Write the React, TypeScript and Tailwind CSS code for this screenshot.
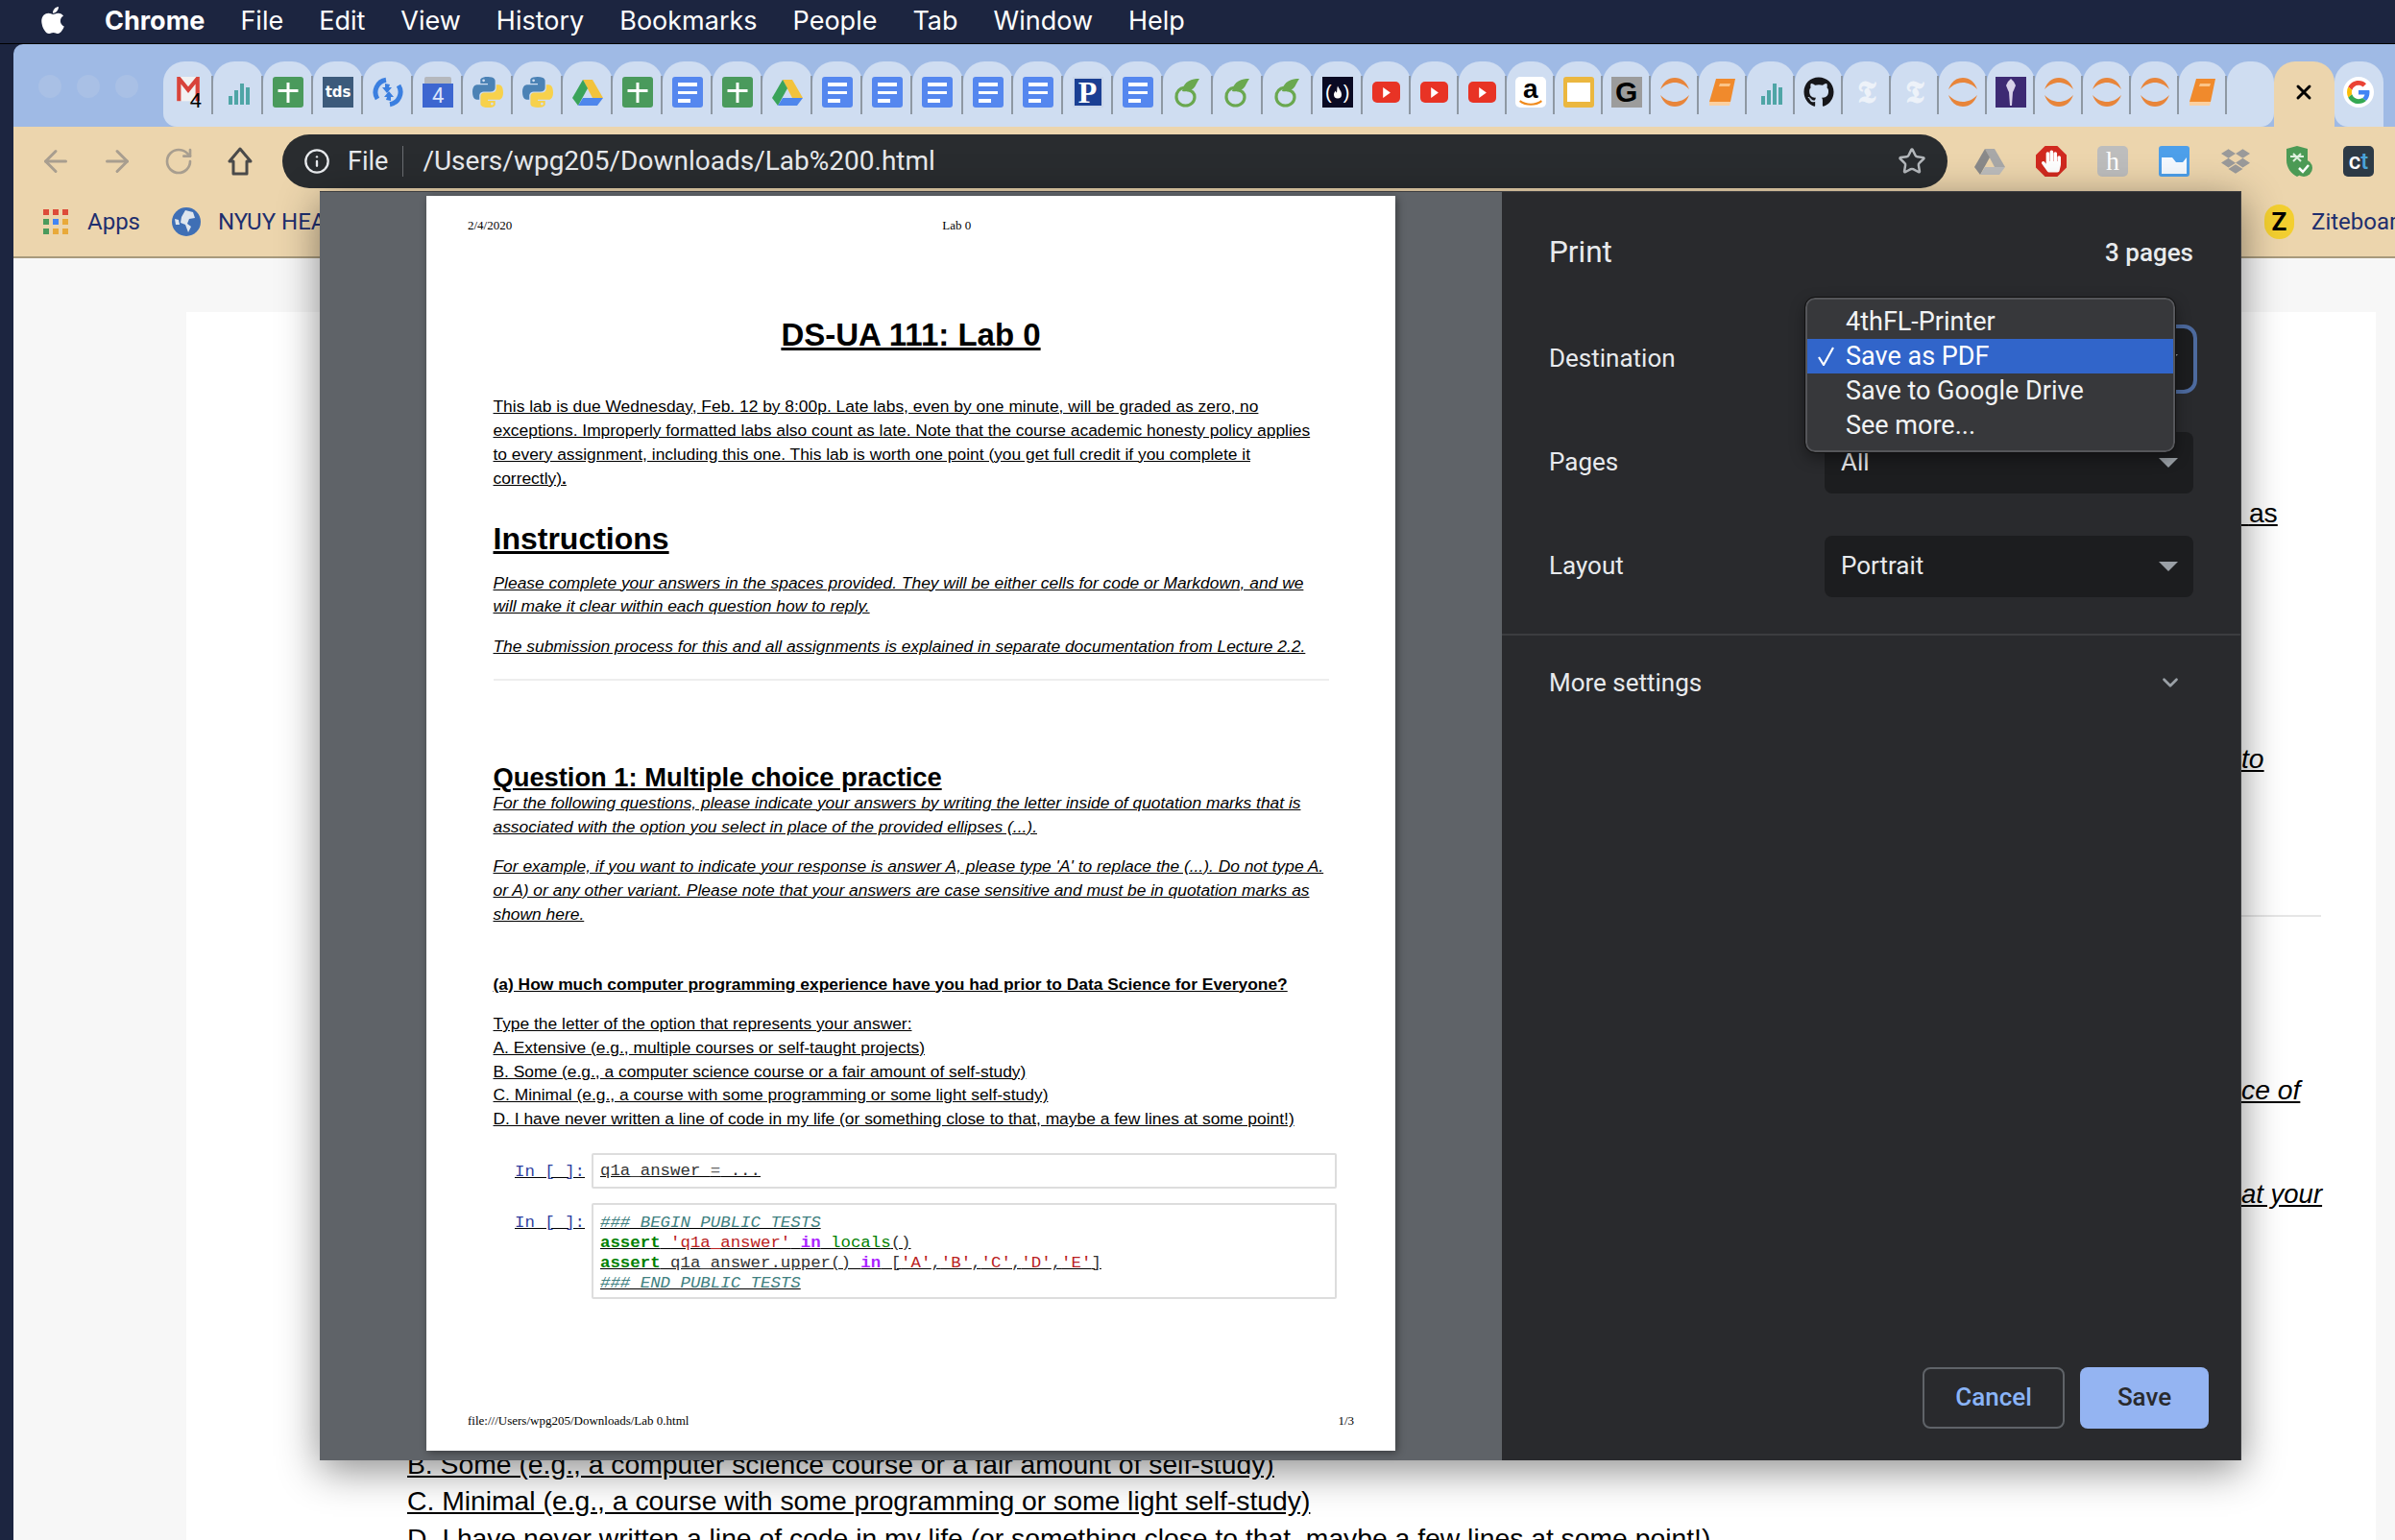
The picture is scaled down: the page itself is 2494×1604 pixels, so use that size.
import React from "react";
import { FaApple, FaGithub, FaDropbox, FaHandPaper } from "react-icons/fa";
import { ArrowLeft, ArrowRight, RotateCw, Info, Star, ChevronDown, X } from "lucide-react";

const Sheet = () => (
  <div className="w-8 h-8 rounded-[3px] bg-[#4a9a5c] relative">
    <svg viewBox="0 0 32 32" className="w-8 h-8"><path d="M14.500 6h3v7h9v3h-9v11h-3V16h-9v-3h9z" fill="#fff" /></svg>
  </div>
);
const Doc = () => (
  <div className="w-8 h-8 rounded-[3px] bg-[#5587ef] flex flex-col gap-[5px] pt-[6px] pl-[6px]">
    <div className="w-5 h-[3.500px] bg-white" />
    <div className="w-5 h-[3.500px] bg-white" />
    <div className="w-[13px] h-[3.500px] bg-white" />
  </div>
);
const Bars = () => (
  <svg viewBox="0 0 32 32" className="w-8 h-8" fill="#4fa5a6">
    <rect x="6" y="20" width="4" height="9" /><rect x="12" y="14" width="4" height="15" /><rect x="18" y="7" width="4" height="22" /><rect x="24" y="11" width="4" height="18" />
  </svg>
);
const Python = () => (
  <svg viewBox="0 0 24 24" className="w-8 h-8">
    <path fill="#4b82b5" d="M11.900 0C5.800 0 6.200 2.600 6.200 2.600v2.700h5.800v.8H3.900S0 5.700 0 11.900s3.400 6 3.400 6h2V15s-.1-3.400 3.300-3.400h5.800s3.200.1 3.200-3.100V3.200S18.200 0 11.900 0zM8.700 1.800a1 1 0 110 2.100 1 1 0 010-2.100z" />
    <path fill="#f7d14c" d="M12.100 24c6.100 0 5.700-2.600 5.700-2.600v-2.700h-5.800v-.8h8.100s3.900.4 3.900-5.800-3.400-6-3.400-6h-2V9s.1 3.400-3.300 3.400H9.500s-3.200-.1-3.200 3.100v5.300S5.800 24 12.100 24zm3.200-1.800a1 1 0 110-2.100 1 1 0 010 2.100z" />
  </svg>
);
const Drive = ({ grey = false }: { grey?: boolean }) => (
  <svg viewBox="0 0 32 32" className="w-8 h-8">
    <path fill={grey ? "#a8a8a8" : "#f3c33c"} d="M11 3h10l11 19H21z" />
    <path fill={grey ? "#8a8a8a" : "#3aa35a"} d="M11 3l5 9-10 18-6-8z" />
    <path fill={grey ? "#bcbcbc" : "#4e86ec"} d="M11 22h21l-6 8H6z" />
  </svg>
);
const Overleaf = () => (
  <svg viewBox="0 0 32 32" className="w-8 h-8" fill="none">
    <path d="M13 11C7 12 4 16 4 21c0 5 4 9 9.500 9s9.500-4 9.500-9c0-4-3-7-7-7" stroke="#6aa84f" strokeWidth="3.200" strokeLinecap="round" />
    <path d="M28 2C20 2 12 4 10 15c6 1 11-1 13.500-5 1.500-3 3-6 4.500-8z" fill="#6aa84f" />
  </svg>
);
const YT = () => (
  <div className="w-[29px] h-[22px] rounded-[5px] bg-[#e83325] flex items-center justify-center">
    <svg viewBox="0 0 10 10" className="w-[11px] h-[11px]"><path d="M2 0l7 5-7 5z" fill="#fff" /></svg>
  </div>
);
const Arcs = () => (
  <svg viewBox="0 0 32 32" className="w-8 h-8" fill="#e8853a">
    <path d="M1 13C4 5 9 1 16 1s12 4 15 12C26 8 21 6 16 6S6 8 1 13z" />
    <path d="M1 19c3 8 8 12 15 12s12-4 15-12c-5 5-10 7-15 7S6 24 1 19z" />
  </svg>
);
const Book = () => (
  <svg viewBox="0 0 32 32" className="w-8 h-8">
    <path d="M9 2h20l-5 24H2z" fill="#f08a2c" />
    <path d="M2 26h22l-1 4H2z" fill="#fbd0a0" />
    <path d="M13 7h11l-1 3H12z" fill="#fbc488" />
  </svg>
);
const Nyt = () => (
  <span className="w-8 h-8 flex items-center justify-center text-[#edf2f9] text-[32px] leading-8 font-bold font-['DejaVu_Serif','DejaVu_Sans',serif]">𝕿</span>
);

const icons: React.ReactNode[] = [
  <div className="w-[28px] h-8 relative">
    <svg viewBox="0 0 28 32" className="w-[28px] h-[27px]"><rect width="28" height="30" fill="#f2f2f2" /><path d="M0 0h4l10 12L24 0h4v30h-5V9l-9 11L5 9v21H0z" fill="#d8433a" /></svg>
    <span className="absolute right-0 bottom-[-4px] text-[22px] leading-[22px] text-black font-['Liberation_Sans',sans-serif]">4</span>
  </div>,
  <Bars />, <Sheet />,
  <div className="w-8 h-8 bg-[#3c5a7b] text-white text-[15px] font-bold flex items-center justify-center font-['DejaVu_Sans',sans-serif]">tds</div>,
  <svg viewBox="0 0 32 32" className="w-8 h-8" fill="none">
    <path d="M14 3.200A13 13 0 005 23" stroke="#3b7fe0" strokeWidth="5" />
    <path d="M18 28.800A13 13 0 0027 9" stroke="#3b7fe0" strokeWidth="5" />
    <path d="M10 11h3V7l5 1-1 3h3l-5 6z" fill="#3b7fe0" />
    <path d="M22 21h-3v4l-5-1 1-3h-3l5-6z" fill="#3b7fe0" />
  </svg>,
  <div className="w-8 h-8 relative">
    <div className="h-[7px] bg-[#b5b8bd] rounded-t-[2px] mx-[2px]" />
    <div className="h-[25px] bg-[#3d66d0] text-[#dbe5fb] text-[22px] leading-[25px] text-center font-['Roboto',sans-serif]">4</div>
  </div>,
  <Python />, <Python />, <Drive />, <Sheet />, <Doc />, <Sheet />, <Drive />, <Doc />, <Doc />, <Doc />, <Doc />, <Doc />,
  <div className="w-8 h-8 bg-[#1b3f93] text-white text-[32px] leading-[28px] font-bold text-center font-['Liberation_Serif',serif] border-[2px] border-[#c9d6ea]">P</div>,
  <Doc />, <Overleaf />, <Overleaf />, <Overleaf />,
  <div className="w-8 h-8 bg-[#0a0a23] text-white flex items-center justify-center text-[20px] leading-8 font-['Liberation_Sans',sans-serif]">
    (<svg viewBox="0 0 10 14" className="w-[10px] h-[15px] mx-[1px]"><path d="M5 0c1 3 4 5 4 9a4 4 0 01-8 0c0-2 1-3 2-4 0 1 .5 2 1 2 .5-2 0-4 1-7z" fill="#fff" /></svg>)
  </div>,
  <YT />, <YT />, <YT />,
  <div className="w-8 h-8 rounded-[5px] bg-white relative flex justify-center">
    <span className="text-[28px] leading-[26px] font-bold text-black font-['Liberation_Sans',sans-serif]">a</span>
    <svg viewBox="0 0 32 8" className="absolute bottom-[1px] left-[3px] w-[26px] h-[7px]"><path d="M2 1c8 6 20 6 28 0" stroke="#f08a1c" strokeWidth="2.500" fill="none" /></svg>
  </div>,
  <div className="w-8 h-8 rounded-[3px] bg-[#ebb73f] flex items-center justify-center"><div className="w-6 h-[20px] bg-white" /></div>,
  <div className="w-8 h-8 bg-[#9c9c9c] text-black text-[30px] leading-8 font-bold text-center font-['Liberation_Sans',sans-serif]">G</div>,
  <Arcs />, <Book />, <Bars />, <FaGithub className="w-8 h-8 text-[#16161a]" />, <Nyt />, <Nyt />, <Arcs />,
  <div className="w-8 h-8 bg-[#3d2a73] flex items-center justify-center">
    <svg viewBox="0 0 16 28" className="w-4 h-7"><path d="M8 0l3 3 2 4-2 5-1 2-1 14H7L6 14 5 12 3 7l2-4z" fill="#d9d2ea" /></svg>
  </div>,
  <Arcs />, <Arcs />, <Arcs />, <Book />,
];

function Tab({ icon, index }: { icon: React.ReactNode; index: number }) {
  return (
    <div className={`${index < 24 ? "w-[52.040px]" : "w-[50px]"} ${index === 0 ? "rounded-bl-[14px]" : ""} h-[68px] bg-[#cfddf1] rounded-t-[22px] flex items-center justify-center relative shrink-0 pb-[4px]`}>
      {icon}
      <div className="absolute right-0 top-[15px] w-[2px] h-[40px] bg-[#8e98a3]" />
    </div>
  );
}

const Fav = ({ children }: { children: React.ReactNode }) => (
  <div className="w-8 h-8 flex items-center justify-center shrink-0">{children}</div>
);

const UI = "font-['Roboto',sans-serif]";

function Row({ label, children }: { label: string; children: React.ReactNode }) {
  return (
    <div className="flex items-center justify-between h-16">
      <span className="text-[26px] text-[#e8eaed] pb-[2px]">{label}</span>
      {children}
    </div>
  );
}
const Caret = () => (
  <svg viewBox="0 0 20 10" className="w-5 h-[10px]"><path d="M0 0h20L10 10z" fill="#9aa0a6" /></svg>
);
function Select({ value }: { value: string }) {
  return (
    <div className="w-[384px] h-16 rounded-[8px] bg-[#1c1d1f] flex items-center justify-between pl-[17px] pr-[16px] text-[26px] text-[#e8eaed]">
      <span className="pb-[2px]">{value}</span>
      <Caret />
    </div>
  );
}

function Page() {
  return (
    <div className="w-[1009px] h-[1307px] bg-white flex flex-col pt-[23px] pb-[23px] shadow-[2px_2px_8px_rgba(0,0,0,0.4)] text-black shrink-0 font-['Liberation_Sans',sans-serif]">
      <div className="flex pl-[43px] text-[13px] leading-4 font-['Liberation_Serif',serif]">
        <span>2/4/2020</span>
        <span className="ml-[448px]">Lab 0</span>
      </div>
      <h1 className="mt-[86px] text-center text-[33px] leading-10 font-bold underline">DS-UA 111: Lab 0</h1>
      <div className="ml-[69.500px] underline text-[17.400px] whitespace-nowrap">
        <div className="mt-[41.500px] leading-[25px]">
          <div>This lab is due Wednesday, Feb. 12 by 8:00p. Late labs, even by one minute, will be graded as zero, no</div>
          <div>exceptions. Improperly formatted labs also count as late. Note that the course academic honesty policy applies</div>
          <div>to every assignment, including this one. This lab is worth one point (you get full credit if you complete it</div>
          <div>correctly)<b>.</b></div>
        </div>
        <h2 className="mt-[30.500px] text-[32px] leading-10 font-bold">Instructions</h2>
        <div className="mt-[13.500px] leading-[24.500px] italic">
          <div>Please complete your answers in the spaces provided. They will be either cells for code or Markdown, and we</div>
          <div>will make it clear within each question how to reply.</div>
        </div>
        <div className="mt-[17px] leading-[24.500px] italic">The submission process for this and all assignments is explained in separate documentation from Lecture 2.2.</div>
        <div className="mt-[22px] h-[2px] w-[870px] bg-[#eeeeee]" />
        <h3 className="mt-[88px] text-[27.300px] leading-[26px] font-bold">Question 1: Multiple choice practice</h3>
        <div className="mt-[0.500px] leading-[25px] italic">
          <div>For the following questions, please indicate your answers by writing the letter inside of quotation marks that is</div>
          <div>associated with the option you select in place of the provided ellipses (...).</div>
        </div>
        <div className="mt-[16px] leading-[25px] italic">
          <div>For example, if you want to indicate your response is answer A, please type 'A' to replace the (...). Do not type A.</div>
          <div>or A) or any other variant. Please note that your answers are case sensitive and must be in quotation marks as</div>
          <div>shown here.</div>
        </div>
        <div className="mt-[48px] leading-[25px] font-bold">(a) How much computer programming experience have you had prior to Data Science for Everyone?</div>
        <div className="mt-[16.500px] leading-[24.800px]">
          <div>Type the letter of the option that represents your answer:</div>
          <div>A. Extensive (e.g., multiple courses or self-taught projects)</div>
          <div>B. Some (e.g., a computer science course or a fair amount of self-study)</div>
          <div>C. Minimal (e.g., a course with some programming or some light self-study)</div>
          <div>D. I have never written a line of code in my life (or something close to that, maybe a few lines at some point!)</div>
        </div>
      </div>
      <div className="ml-[92px] font-['Liberation_Mono',monospace] text-[17.400px] underline whitespace-pre">
        <div className="mt-[23px] flex">
          <div className="w-[80px] pt-[8px] leading-[24px] text-[#303f9f]">In [ ]:</div>
          <div className="w-[776px] h-[37px] border-2 border-[#dddddd] rounded-[2px] pl-[7px] pt-[5px] leading-[24px] text-[#333333]">q1a_answer <span className="text-[#666666]">=</span> ...</div>
        </div>
        <div className="mt-[15px] flex">
          <div className="w-[80px] pt-[9px] leading-[24px] text-[#303f9f]">In [ ]:</div>
          <div className="w-[776px] h-[100px] border-2 border-[#dddddd] rounded-[2px] pl-[7px] pt-[8px] leading-[21px] text-[#333333]">
            <div className="italic text-[#408080]">### BEGIN PUBLIC TESTS</div>
            <div><b className="text-[#008000]">assert</b> <span className="text-[#ba2121]">'q1a_answer'</span> <b className="text-[#aa22ff]">in</b> <span className="text-[#008000]">locals</span>()</div>
            <div><b className="text-[#008000]">assert</b> q1a_answer.upper() <b className="text-[#aa22ff]">in</b> [<span className="text-[#ba2121]">'A'</span>,<span className="text-[#ba2121]">'B'</span>,<span className="text-[#ba2121]">'C'</span>,<span className="text-[#ba2121]">'D'</span>,<span className="text-[#ba2121]">'E'</span>]</div>
            <div className="italic text-[#408080]">### END PUBLIC TESTS</div>
          </div>
        </div>
      </div>
      <div className="mt-auto flex justify-between px-[43px] text-[13px] leading-4 font-['Liberation_Serif',serif]">
        <span>file:///Users/wpg205/Downloads/Lab 0.html</span>
        <span>1/3</span>
      </div>
    </div>
  );
}

function PrintDialog() {
  return (
    <div className={`absolute left-[333px] top-[199px] w-[2001px] h-[1322px] flex bg-[#5f6368] shadow-[0_10px_40px_rgba(0,0,0,0.45)] ${UI}`}>
      <div className="w-[1231px] flex justify-start pl-[111px] pt-[4px] border-t border-[#3c3d40]">
        <Page />
      </div>
      <div className="relative w-[770px] bg-[#292a2d] flex flex-col border-t border-r border-[#3c3d40]">
        <div className="mt-[43px] h-10 pl-[49px] pr-[49px] flex items-center justify-between text-[#e8eaed]">
          <span className="text-[31.500px]">Print</span>
          <span className="text-[26px] font-medium">3 pages</span>
        </div>
        <div className="mt-[59px] pl-[49px] pr-[49px] flex flex-col gap-[44px]">
          <Row label="Destination">
            <div className="rounded-[10px] outline-[4px] outline-[#4d6a9e]"><Select value="Save as PDF" /></div>
          </Row>
          <Row label="Pages"><Select value="All" /></Row>
          <Row label="Layout"><Select value="Portrait" /></Row>
        </div>
        <div className="mt-[38px] h-[2px] bg-[#3c3d40]" />
        <div className="mt-[29px] h-10 pl-[49px] pr-[60px] flex items-center justify-between">
          <span className="text-[26px] text-[#e8eaed]">More settings</span>
          <ChevronDown className="w-[26px] h-[26px] text-[#9aa0a6]" strokeWidth={2.500} />
        </div>
        <div className="mt-auto mb-[33px] pr-[33px] flex justify-end gap-4">
          <button className="w-[148px] h-16 rounded-[8px] border-2 border-[#5f6368] pb-[2px] text-[26px] font-medium text-[#8ab4f8]">Cancel</button>
          <button className="w-[134px] h-16 rounded-[8px] bg-[#94b4f2] pb-[2px] text-[26px] font-medium text-[#292a2d]">Save</button>
        </div>
        <div className="absolute left-[316px] top-[110px] w-[385px] h-[161px] rounded-[10px] bg-[#37383b] border-2 border-[#55565a] outline outline-[#111111] pt-[5px] text-[27px] leading-[36px] text-[#f1f3f4] shadow-[0_6px_16px_rgba(0,0,0,0.4)]">
          <div className="h-9 pl-[40px]">4thFL-Printer</div>
          <div className="h-9 pl-[40px] bg-[#3165ca] relative text-white">
            <svg viewBox="0 0 20 20" className="absolute left-[10px] top-[8px] w-[20px] h-[20px]" fill="none"><path d="M2 11l5 8L17 1" stroke="#fff" strokeWidth="2.200" /></svg>
            Save as PDF
          </div>
          <div className="h-9 pl-[40px]">Save to Google Drive</div>
          <div className="h-9 pl-[40px]">See more...</div>
        </div>
      </div>
    </div>
  );
}

export default function App() {
  return (
    <div className={`relative w-[2494px] h-[1604px] overflow-hidden bg-[#1c2540] ${UI}`}>
      {/* menu bar */}
      <div className="h-[45px] flex items-center text-white text-[27px] font-['Inter',sans-serif]">
        <FaApple className="ml-[41px] w-[28px] h-[32px] mb-[4px]" />
        <div className="ml-[40px] flex gap-[37px] items-center">
          <span className="font-bold">Chrome</span>
          <span>File</span>
          <span>Edit</span>
          <span>View</span>
          <span>History</span>
          <span>Bookmarks</span>
          <span>People</span>
          <span>Tab</span>
          <span>Window</span>
          <span>Help</span>
        </div>
      </div>
      <div className="h-[1px] bg-black" />
      {/* window */}
      <div className="ml-[14px] rounded-tl-[10px] overflow-hidden flex flex-col h-[1558px]">
        <div className="h-[86px] bg-[#9fbae5] flex items-end shrink-0">
          <div className="w-[156px] h-full flex items-start gap-[16px] pl-[26px] pt-[32px]">
            <div className="w-6 h-6 rounded-full bg-[#a9c0e5]" />
            <div className="w-6 h-6 rounded-full bg-[#a9c0e5]" />
            <div className="w-6 h-6 rounded-full bg-[#a9c0e5]" />
          </div>
          {icons.map((ic, i) => <Tab key={i} icon={ic} index={i} />)}
          <div className="w-[49px] h-[68px] bg-[#cfddf1] rounded-t-[22px] rounded-br-[14px] shrink-0" />
          <div className="w-[63px] h-[68px] bg-[#ecd5ad] rounded-t-[22px] flex items-center justify-center pb-[4px] shrink-0">
            <X className="w-[24px] h-[24px] text-black" strokeWidth={3} />
          </div>
          <div className="w-[51px] h-[68px] bg-[#cfddf1] rounded-t-[22px] rounded-bl-[14px] flex items-center justify-center pb-[4px] shrink-0">
            <div className="w-8 h-8 rounded-full bg-white flex items-center justify-center">
              <svg viewBox="0 0 48 48" className="w-[24px] h-[24px]">
                <path fill="#EA4335" d="M24 9.500c3.540 0 6.710 1.220 9.210 3.600l6.850-6.850C35.900 2.380 30.470 0 24 0 14.620 0 6.510 5.380 2.560 13.220l7.980 6.190C12.430 13.720 17.740 9.500 24 9.500z" />
                <path fill="#4285F4" d="M46.980 24.550c0-1.570-.15-3.090-.38-4.550H24v9.020h12.940c-.58 2.960-2.260 5.480-4.780 7.180l7.730 6c4.510-4.180 7.090-10.360 7.090-17.650z" />
                <path fill="#FBBC05" d="M10.530 28.590c-.5-1.450-.78-2.990-.78-4.590s.27-3.140.76-4.590l-7.980-6.190C.92 16.460 0 20.120 0 24c0 3.880.92 7.540 2.560 10.780l7.970-6.190z" />
                <path fill="#34A853" d="M24 48c6.480 0 11.930-2.130 15.890-5.810l-7.730-6c-2.150 1.450-4.920 2.300-8.160 2.300-6.260 0-11.570-4.220-13.470-9.910l-7.980 6.190C6.510 42.620 14.620 48 24 48z" />
              </svg>
            </div>
          </div>
        </div>

        {/* toolbar */}
        <div className="bg-[#ecd5ad] shrink-0">
          <div className="h-[56px] mt-[8px] flex items-center">
            <div className="flex items-center pl-[12px] w-[280px]">
              <div className="w-16 flex justify-center"><ArrowLeft className="w-9 h-9 text-[#a89e8f]" strokeWidth={2} /></div>
              <div className="w-16 flex justify-center"><ArrowRight className="w-9 h-9 text-[#a89e8f]" strokeWidth={2} /></div>
              <div className="w-16 flex justify-center"><RotateCw className="w-8 h-8 text-[#a89e8f]" strokeWidth={2} /></div>
              <div className="w-16 flex justify-center">
                <svg viewBox="0 0 28 32" className="w-[28px] h-[32px]"><path d="M14 3L3 16h4v13h14V16h4z" fill="none" stroke="#4a4a4a" strokeWidth="3" strokeLinejoin="round" /></svg>
              </div>
            </div>
            <div className="w-[1734px] h-[56px] rounded-full bg-[#292c2f] flex items-center pl-[22px] pr-[22px] text-[#e8eaed] text-[28px]">
              <Info className="w-[28px] h-[28px]" strokeWidth={2} />
              <span className="ml-[18px] text-[27px]">File</span>
              <div className="w-[1px] h-8 bg-[#6b6e72] ml-[15px]" />
              <span className="ml-[20px]">/Users/wpg205/Downloads/Lab%200.html</span>
              <Star className="ml-auto w-[30px] h-[30px] text-[#b4b8bc]" strokeWidth={2} />
            </div>
            <div className="ml-[28px] flex gap-[32px] items-center">
              <Fav><Drive grey /></Fav>
              <Fav>
                <div className="w-8 h-8 bg-[#d1291f] flex items-center justify-center [clip-path:polygon(30%_0,70%_0,100%_30%,100%_70%,70%_100%,30%_100%,0_70%,0_30%)]">
                  <FaHandPaper className="w-[20px] h-[24px] text-white" />
                </div>
              </Fav>
              <Fav><div className="w-8 h-8 rounded-[5px] bg-[#bdbdbd] text-white text-[28px] leading-8 text-center font-['Liberation_Serif',serif]">h</div></Fav>
              <Fav>
                <div className="w-8 h-8 rounded-[3px] bg-[#4d9fea] flex items-end pb-[3px] px-[3px]">
                  <svg viewBox="0 0 26 17" className="w-[26px] h-[17px]"><path d="M0 0h11l4 5h7l4-5v17H0z" fill="#f4f9ff" /></svg>
                </div>
              </Fav>
              <Fav><FaDropbox className="w-[30px] h-[30px] text-[#9a9a9a]" /></Fav>
              <Fav>
                <svg viewBox="0 0 32 32" className="w-8 h-8">
                  <path d="M16 0l11 3v12c0 8-5 14-11 17C10 29 5 23 5 15V3z" fill="#4c9a55" />
                  <circle cx="23" cy="23" r="9" fill="#4c9a55" /><path d="M18 23l4 4 6-7" stroke="#fff" strokeWidth="2.500" fill="none" />
                  <path d="M9 11h14M12 8l8 8M20 8l-8 8" stroke="#dff0df" strokeWidth="2" />
                </svg>
              </Fav>
              <Fav>
                <div className="w-8 h-8 rounded-[5px] bg-[#2d3a46] text-[24px] leading-8 text-center text-white font-medium">c<span className="text-[#4aa3d8]">t</span></div>
              </Fav>
            </div>
          </div>
          {/* bookmarks */}
          <div className="h-[73px] flex items-center border-b-2 border-[#a89a7c] pb-[2px]">
            <div className="ml-[31px] grid grid-cols-3 gap-[4px] w-[26px]">
              {["#dd4b39", "#dd4b39", "#dd4b39", "#4a9a5c", "#4285f4", "#e8a93a", "#4a9a5c", "#e8a93a", "#e8a93a"].map((c, i) => (
                <div key={i} className="w-[6px] h-[6px]" style={{ background: c }} />
              ))}
            </div>
            <span className="ml-[20px] text-[24px] text-[#1f2f6e]">Apps</span>
            <svg viewBox="0 0 30 30" className="ml-[33px] w-[30px] h-[30px]">
              <circle cx="15" cy="15" r="15" fill="#3f6fb5" />
              <path d="M14 3l8 2 2 6-6 1-2 5 4 3-3 6-3-8-5-2 1-6z" fill="#dfe6ee" />
              <path d="M3 12l4 1 1 5-4 0z" fill="#dfe6ee" />
            </svg>
            <span className="ml-[18px] text-[24px] text-[#1f2f6e] whitespace-nowrap">NYUY HEA</span>
            <div className="ml-auto flex items-center">
              <div className="w-[31px] h-[36px] rounded-full bg-[#f3cf30] text-black text-[26px] leading-[36px] font-bold text-center">Z</div>
              <span className="ml-[18px] w-[87px] overflow-hidden text-[24px] text-[#1f2f6e] whitespace-nowrap">Ziteboard</span>
            </div>
          </div>
        </div>

        {/* underlying page */}
        <div className="flex-1 bg-[#f7f7f7] pt-[56px] pl-[180px] pr-[20px] overflow-hidden">
          <div className="bg-white h-[1400px] pt-[189px] text-black text-[28.300px] font-['Liberation_Sans',sans-serif] whitespace-pre">
            <div className="ml-[2140px] leading-10 underline">{" "}as</div>
            <div className="mt-[216px] ml-[2140px] leading-10 underline italic">to</div>
            <div className="mt-[143px] ml-[230px] w-[1993px] h-[2px] bg-[#e6e6e6]" />
            <div className="mt-[160px] ml-[2140px] leading-10 underline italic">ce of</div>
            <div className="mt-[69px] ml-[2140px] text-[27.500px] leading-10 underline italic">at your</div>
            <div className="mt-[242px] ml-[230px] leading-[38px] underline">B. Some (e.g., a computer science course or a fair amount of self-study)</div>
            <div className="ml-[230px] leading-[39px] underline">C. Minimal (e.g., a course with some programming or some light self-study)</div>
            <div className="ml-[230px] leading-[38px] underline">D. I have never written a line of code in my life (or something close to that, maybe a few lines at some point!)</div>
          </div>
        </div>
      </div>
      <PrintDialog />
    </div>
  );
}
